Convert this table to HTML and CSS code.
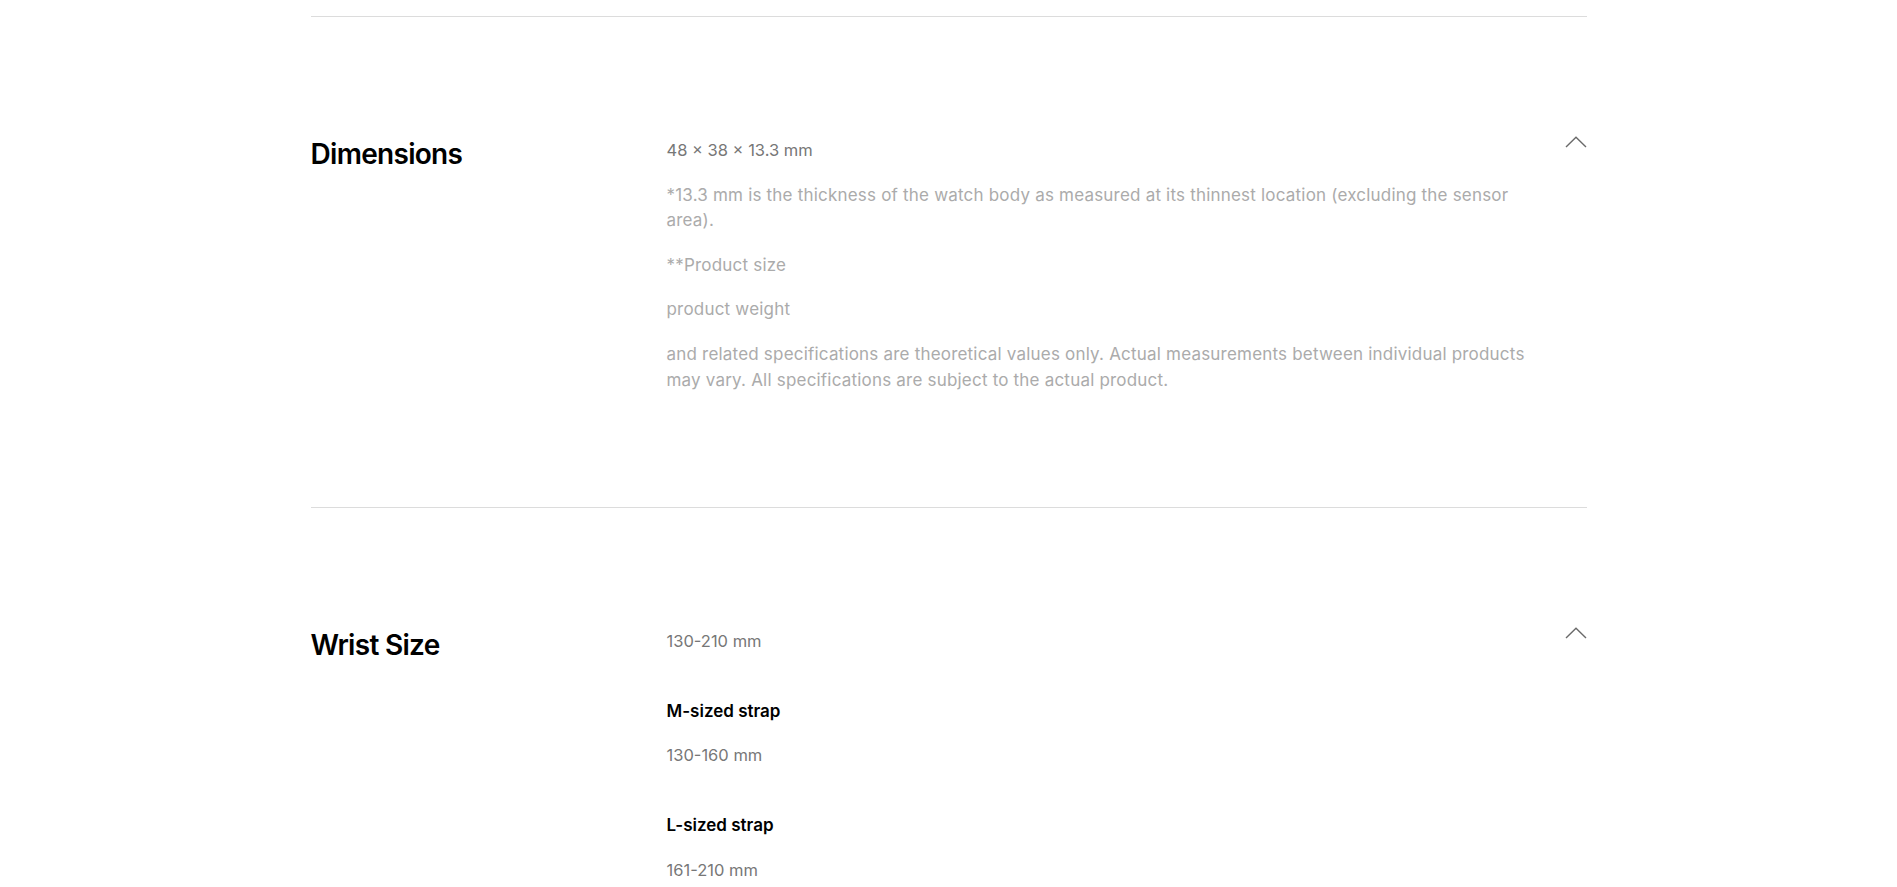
FILE: index.html
```html
<!DOCTYPE html>
<html lang="en">
<head>
<meta charset="utf-8">
<title>Specs</title>
<link rel="stylesheet" href="styles.css">
</head>
<body>
<main class="specs">
  <section class="spec">
    <h2 class="spec-title">Dimensions</h2>
    <div class="spec-body">
      <p class="val">48 × 38 × 13.3 mm</p>
      <p class="note">*13.3 mm is the thickness of the watch body as measured at its thinnest location (excluding the sensor area).</p>
      <p class="note">**Product size</p>
      <p class="note">product weight</p>
      <p class="note">and related specifications are theoretical values only. Actual measurements between individual products may vary. All specifications are subject to the actual product.</p>
    </div>
    <button class="toggle" aria-label="Collapse">
      <svg width="22" height="12" viewBox="0 0 22 12"><polyline points="1,11 11,1.2 21,11" fill="none" stroke="#6a6a6a" stroke-width="1.4"/></svg>
    </button>
  </section>
  <section class="spec">
    <h2 class="spec-title">Wrist Size</h2>
    <div class="spec-body">
      <p class="val">130-210 mm</p>
      <div class="group">
        <p class="sub">M-sized strap</p>
        <p class="val">130-160 mm</p>
      </div>
      <div class="group">
        <p class="sub">L-sized strap</p>
        <p class="val">161-210 mm</p>
      </div>
    </div>
    <button class="toggle" aria-label="Collapse">
      <svg width="22" height="12" viewBox="0 0 22 12"><polyline points="1,11 11,1.2 21,11" fill="none" stroke="#6a6a6a" stroke-width="1.4"/></svg>
    </button>
  </section>
</main>
</body>
</html>
```

FILE: styles.css
```css
html, body {
  margin: 0;
  padding: 0;
  background: #fff;
}
body {
  font-family: Inter, "Noto Sans", sans-serif;
  color: #000;
  padding-top: 16px;
}
.specs {
  width: 1276px;
  margin: 0 auto;
}
.spec {
  display: grid;
  grid-template-columns: 356px 878px 1fr;
  align-items: start;
  border-top: 1px solid #dcdcdc;
  padding: 120px 0 114px;
}
.spec-title {
  margin: 0;
  font-size: 28px;
  line-height: 34px;
  font-weight: 600;
  letter-spacing: -0.7px;
}
.spec-body {
  padding-top: 1px;
}
.spec-body p {
  margin: 0 0 19px;
  font-size: 17px;
  line-height: 25.6px;
  letter-spacing: 0.2px;
}
.spec-body p:last-child {
  margin-bottom: 0;
}
.val {
  color: #777;
}
.spec-body .val {
  font-size: 16.5px;
  letter-spacing: 0;
}
.note {
  color: #ababab;
}
.group {
  margin-top: 44px;
}
.spec-body .sub {
  color: #000;
  font-weight: 600;
  font-size: 17px;
  letter-spacing: 0;
}
.group .sub {
  margin-bottom: 19px;
}
.toggle {
  justify-self: end;
  background: none;
  border: 0;
  padding: 0;
  margin: -1px 0 0;
  width: 22px;
  height: 12px;
  display: flex;
  cursor: pointer;
}
```
